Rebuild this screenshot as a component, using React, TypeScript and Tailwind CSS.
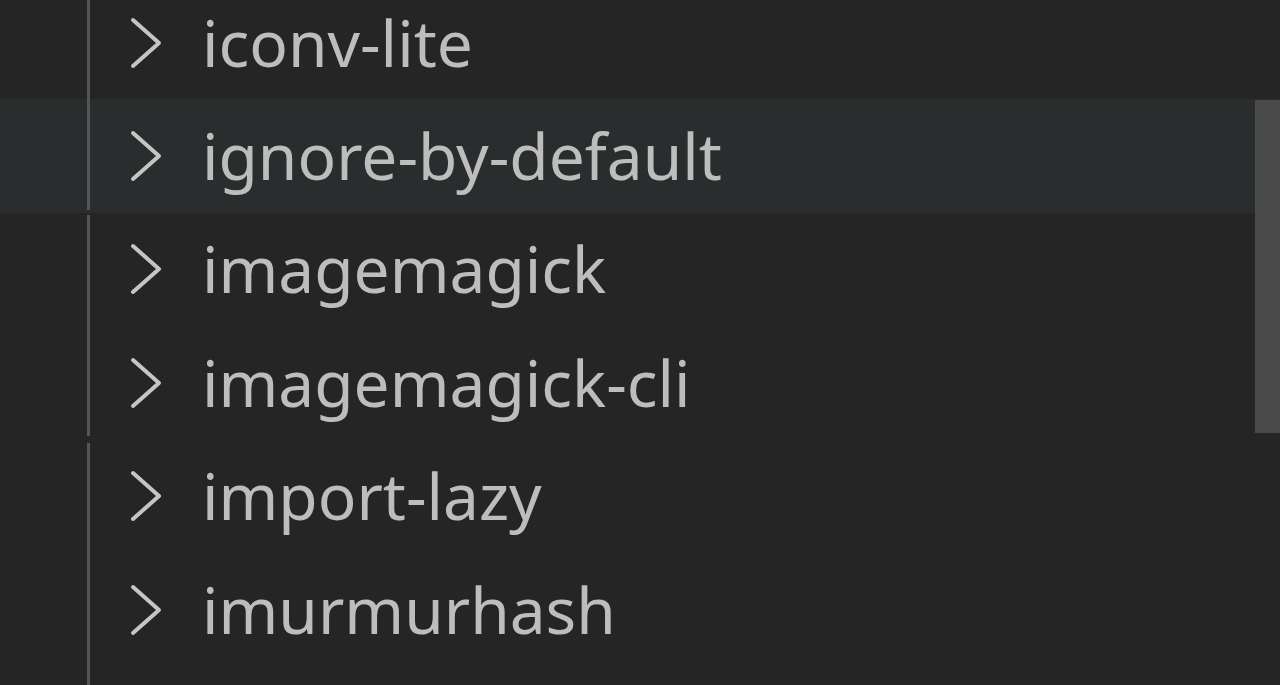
const items = ['iconv-lite', 'ignore-by-default', 'imagemagick', 'imagemagick-cli', 'import-lazy', 'imurmurhash'];

function Chevron() {
  return (
    <svg width="36" height="52" viewBox="0 0 36 52" fill="none" className="shrink-0">
      <path d="M4 3 L30 26 L4 49" stroke="#c5c5c5" strokeWidth="4" strokeLinecap="round" strokeLinejoin="round" />
    </svg>
  );
}

// small breaks in the indent guide, as in the capture
const guideGap = ['', 'mb-[3px]', 'mt-[2px]', 'mb-[4px]', 'mt-[3px]', ''];

export default function App() {
  return (
    <div className="relative flex h-[685px] w-[1280px] flex-col overflow-hidden bg-[#252526] font-['Noto_Sans',sans-serif]">
      <div className="-mt-[14px] flex flex-col">
        {items.map((name, i) => (
          <div
            key={name}
            className={`flex h-[113.4px] items-center ${i === 1 ? 'bg-[#2a2d2e]' : ''}`}
          >
            <div className={`ml-[87px] w-[3px] self-stretch bg-[#555555] ${guideGap[i]}`} />
            <div className="ml-[39px] flex items-center">
              <Chevron />
            </div>
            <span className="ml-[37px] text-[64px] leading-none text-[#bdbdbd]">{name}</span>
          </div>
        ))}
      </div>
      <div className="flex flex-1">
        <div className="ml-[87px] w-[3px] bg-[#555555]" />
      </div>
      {/* scrollbar thumb */}
      <div className="absolute right-0 top-[100px] h-[333px] w-[25px] bg-[#4a4a4a]" />
    </div>
  );
}
